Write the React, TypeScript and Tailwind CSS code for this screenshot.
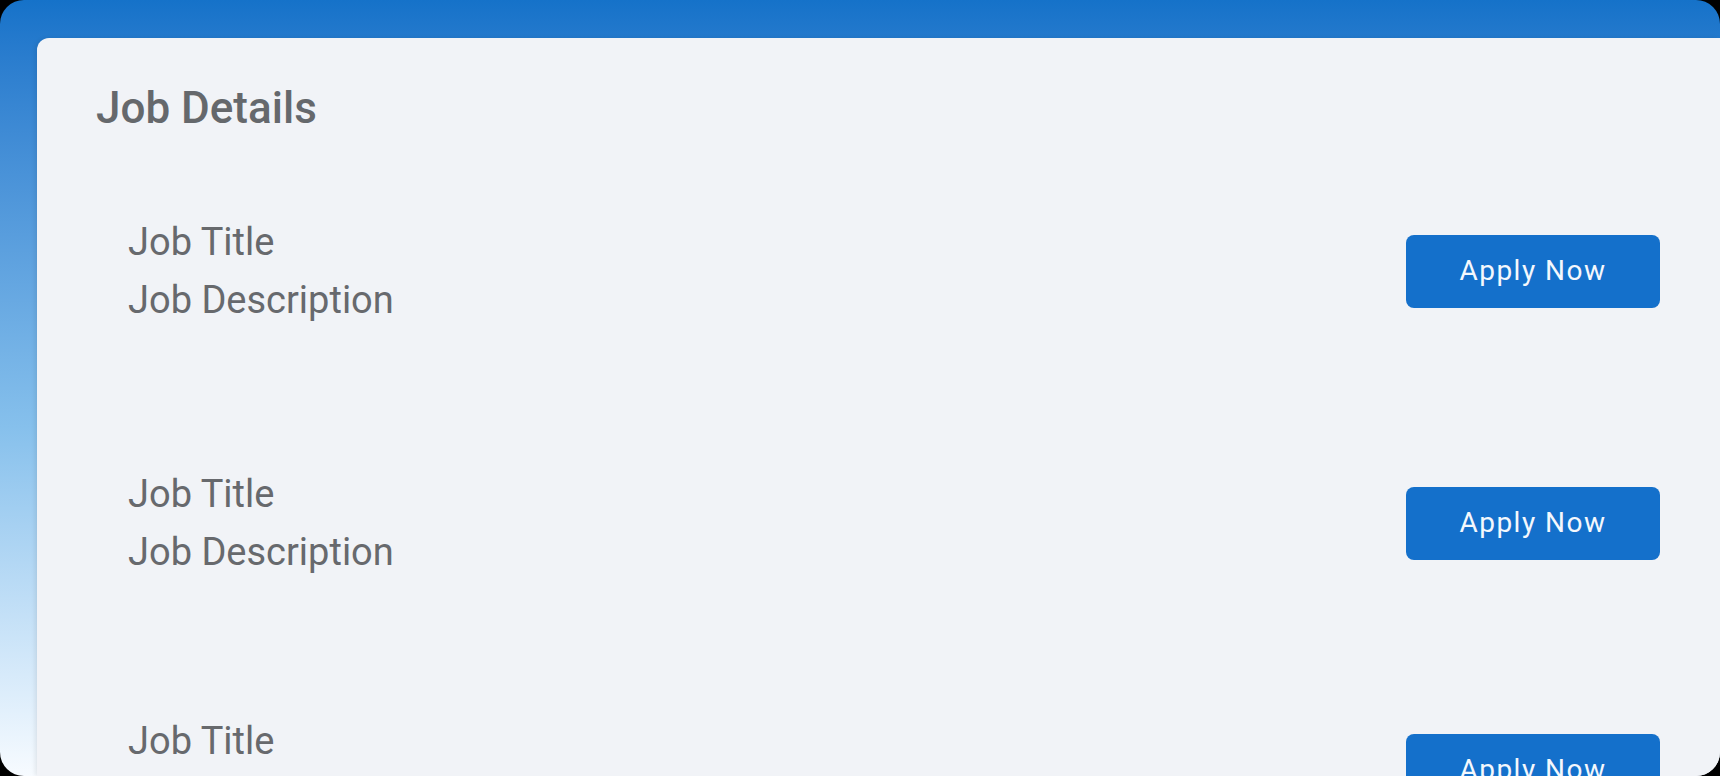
import React from "react";

const jobs = [
    { title: "Job Title", description: "Job Description", spacing: "" },
    { title: "Job Title", description: "Job Description", spacing: "" },
    { title: "Job Title", description: "Job Description", spacing: "-mt-[5px]" },
];

export default function App() {
    return (
        <div className="h-[776px] w-full bg-black overflow-hidden" style={{ fontFamily: "Roboto, 'Noto Sans', sans-serif" }}>
            <div className="h-full w-full rounded-[24px] overflow-hidden bg-gradient-to-b from-[#1572c9] via-[#86c0ec] via-55% to-[#f7fbff] pt-[38px] pl-[37px]">
                <div className="h-full bg-[#f1f3f7] rounded-tl-[12px] shadow-[-2px_0_4px_rgba(0,0,0,0.08)] pl-[59px] pr-[60px] pt-[45px]">
                    <h1 className="text-[44px] leading-[50px] font-medium text-[#65686c]">Job Details</h1>

                    {/* Job list */}
                    <div className="mt-[80px] flex flex-col gap-[136px]">
                        {jobs.map((job, index) => (
                            <div key={index} className={`flex items-center justify-between pl-[32px] ${job.spacing}`}>
                                <div className="text-[38px] leading-[58px] text-[#67696d]">
                                    <p>{job.title}</p>
                                    <p>{job.description}</p>
                                </div>
                                <button className="w-[254px] h-[73px] rounded-[8px] bg-[#1470cb] text-[#f4f8fd] text-[28px] tracking-[1.5px]">
                                    Apply Now
                                </button>
                            </div>
                        ))}
                    </div>
                </div>
            </div>
        </div>
    );
}
